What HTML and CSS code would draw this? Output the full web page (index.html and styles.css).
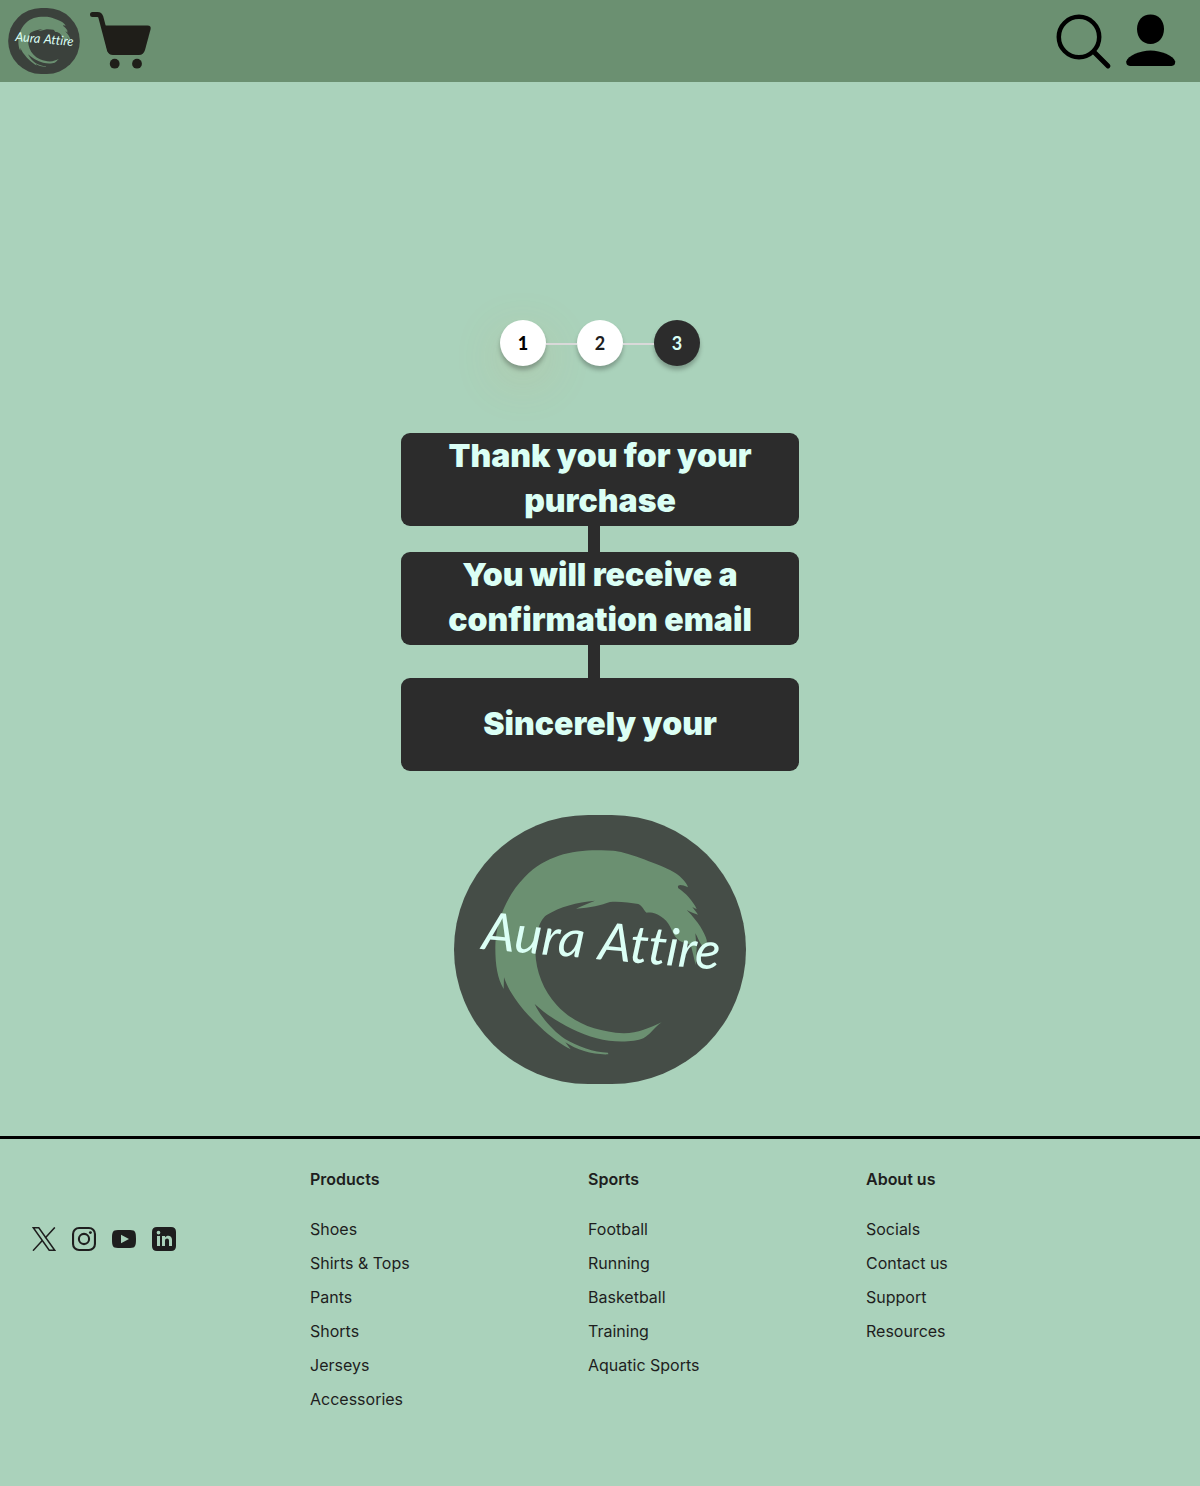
FILE: index.html
```html
<!DOCTYPE html>
<html lang="en">
<head>
  <meta charset="utf-8">
  <meta name="viewport" content="width=device-width, initial-scale=1">
  <title>Aura Attire</title>
  <link rel="stylesheet" href="styles.css">
</head>
<body>
  <svg class="defs" width="0" height="0" aria-hidden="true">
    <symbol id="swoosh" viewBox="12 30 876 807">
      <path d="M455 136C370 134 290 150 225 215C160 280 135 370 136 430C136 480 142 520 161 552L162 517C175 560 220 620 270 665C300 695 340 722 362 733L346 712C380 735 430 750 475 748L474 743C430 742 385 725 345 702C310 678 275 640 254 597C300 640 370 680 440 700C490 714 550 712 580 700C600 690 612 668 635 652C600 668 560 686 520 685C440 680 370 655 320 600C280 555 258 500 256 440C258 400 262 350 290 330C330 305 380 292 435 287C415 295 395 303 378 311C420 309 455 300 480 291C510 289 540 293 565 297C580 305 582 318 590 323C610 322 620 325 640 340C665 360 665 385 680 400C695 415 710 415 722 418L737 480L740 430L736 385C742 395 748 412 756 422C765 430 772 420 770 405C765 385 745 350 710 315C722 322 733 325 744 329C738 320 733 314 727 306C732 309 736 311 740 312C730 290 705 262 685 250C680 240 690 235 714 247C710 232 690 210 660 195C620 175 520 138 490 137Z"/>
    </symbol>
  </svg>

  <header class="topbar">
    <div class="topbar-group">
      <a class="brand" href="#" aria-label="Aura Attire home">
        <svg class="logo logo-small" viewBox="12 30 876 807">
          <rect class="logo-disc" x="12" y="30" width="876" height="807" rx="403"/>
          <use class="logo-swoosh" href="#swoosh" x="12" y="30" width="876" height="807"/>
          <text class="logo-text" transform="translate(94 432) rotate(5)">Aura <tspan x="350">Attire</tspan></text>
        </svg>
      </a>
      <button class="icon-button" type="button" aria-label="Cart">
        <svg width="62" height="58" viewBox="0 0 62 58" fill="#1f1e19">
          <path d="M2.500 2.500H7.500Q10 2.500 10.800 5L19.500 38" fill="none" stroke="#1f1e19" stroke-width="5" stroke-linecap="round"/>
          <path d="M12 13.500H57.500Q61.500 13.500 60.500 17.500L55 38Q53.500 43 49 43H23Q18.500 43 17.500 39Z"/>
          <circle cx="24.700" cy="51.700" r="4.900"/><circle cx="47" cy="51.700" r="4.900"/>
        </svg>
      </button>
    </div>
    <div class="topbar-group topbar-actions">
      <button class="icon-button" type="button" aria-label="Search">
        <svg width="56" height="56" viewBox="0 0 56 56" fill="none" stroke="#000" stroke-linecap="round">
          <circle cx="23" cy="23" r="20.200" stroke-width="4.500"/>
          <path d="M38 38L52 52" stroke-width="4.800"/>
        </svg>
      </button>
      <button class="icon-button" type="button" aria-label="Account">
        <svg width="50" height="54" viewBox="0 0 50 54">
          <path d="M24.500 .500C32.500 .500 38 6.500 38 15S32.500 30 24.500 30 11 23.500 11 15 16.500 .500 24.500 .500Z"/>
          <path d="M4 52Q0 51.500 .200 47.500C2 41.500 14 36.500 24.500 36.500S47.500 41.500 49.200 47.500Q49.500 51.500 45.500 52Z"/>
        </svg>
      </button>
    </div>
  </header>

  <main class="confirmation">
    <ol class="steps">
      <li class="step step-glow">1</li>
      <li class="step">2</li>
      <li class="step step-current" aria-current="step">3</li>
    </ol>

    <section class="messages">
      <h1 class="message">Thank you for your purchase</h1>
      <div class="connector"></div>
      <h2 class="message">You will receive a confirmation email</h2>
      <div class="connector connector-long"></div>
      <h2 class="message">Sincerely your</h2>
    </section>

    <svg class="logo logo-large" viewBox="12 30 876 807" role="img" aria-label="Aura Attire">
      <rect class="logo-disc" x="12" y="30" width="876" height="807" rx="403"/>
      <use class="logo-swoosh" href="#swoosh" x="12" y="30" width="876" height="807"/>
      <text class="logo-text" transform="translate(94 432) rotate(5)">Aura <tspan x="350">Attire</tspan></text>
    </svg>
  </main>

  <footer class="footer">
    <div class="socials">
      <a href="#" aria-label="X">
        <svg width="24" height="24" viewBox="0 0 24 24" fill="none" stroke="#1e1e1e" stroke-width="1.500">
          <path d="M1.300 .800H6.800L22.700 23.200H17.200Z"/><path d="M22.800 .400L13.200 11M10.300 13.600L1 23.700"/>
        </svg>
      </a>
      <a href="#" aria-label="Instagram">
        <svg width="24" height="24" viewBox="0 0 24 24" fill="none" stroke="#1e1e1e" stroke-width="2.100">
          <rect x="1.050" y="1.050" width="21.900" height="21.900" rx="6"/><circle cx="12" cy="12" r="5.100"/>
          <circle cx="18.400" cy="5.600" r="1.450" fill="#1e1e1e" stroke="none"/>
        </svg>
      </a>
      <a href="#" aria-label="YouTube">
        <svg width="24" height="24" viewBox="0 0 24 24">
          <path fill="#1e1e1e" fill-rule="evenodd" d="M12 3C17 3 20 3.100 21.300 3.500C23.600 4.200 24 7 24 12S23.600 19.800 21.300 20.500C20 20.900 17 21 12 21S4 20.900 2.700 20.500C.400 19.800 0 17 0 12S.400 4.200 2.700 3.500C4 3.100 7 3 12 3ZM9 7.800V16.200L17 12Z"/>
        </svg>
      </a>
      <a href="#" aria-label="LinkedIn">
        <svg width="24" height="24" viewBox="0 0 24 24">
          <path fill="#1e1e1e" fill-rule="evenodd" d="M5 0H19Q24 0 24 5V19Q24 24 19 24H5Q0 24 0 19V5Q0 0 5 0ZM5 9V19H8V9ZM6.500 3.700A1.800 1.800 0 1 0 6.500 7.400 1.800 1.800 0 1 0 6.500 3.700ZM10 9V19H13V13.700C13 11 17 10.700 17 13.700V19H20V12.800C20 8.300 15 7.500 13 10.500V9Z"/>
        </svg>
      </a>
    </div>
    <nav class="footer-column" aria-labelledby="products">
      <h3 id="products">Products</h3>
      <ul>
        <li><a href="#">Shoes</a></li>
        <li><a href="#">Shirts &amp; Tops</a></li>
        <li><a href="#">Pants</a></li>
        <li><a href="#">Shorts</a></li>
        <li><a href="#">Jerseys</a></li>
        <li><a href="#">Accessories</a></li>
      </ul>
    </nav>
    <nav class="footer-column" aria-labelledby="sports">
      <h3 id="sports">Sports</h3>
      <ul>
        <li><a href="#">Football</a></li>
        <li><a href="#">Running</a></li>
        <li><a href="#">Basketball</a></li>
        <li><a href="#">Training</a></li>
        <li><a href="#">Aquatic Sports</a></li>
      </ul>
    </nav>
    <nav class="footer-column" aria-labelledby="about">
      <h3 id="about">About us</h3>
      <ul>
        <li><a href="#">Socials</a></li>
        <li><a href="#">Contact us</a></li>
        <li><a href="#">Support</a></li>
        <li><a href="#">Resources</a></li>
      </ul>
    </nav>
  </footer>
</body>
</html>
```
FILE: styles.css
```css
* {
  box-sizing: border-box;
}

body {
  margin: 0;
  background: #aad2bb;
  color: #1e1e1e;
  font-family: Inter, "Liberation Sans", sans-serif;
  font-size: 16px;
}

svg {
  display: block;
}

.defs {
  position: absolute;
}

.topbar {
  display: flex;
  justify-content: space-between;
  padding: 8px 24px 8px 8px;
  background: #6b9071;
}

.topbar-group {
  display: flex;
  align-items: flex-start;
  gap: 10px;
}

.topbar-actions {
  gap: 14px;
  padding-top: 2px;
}

.icon-button {
  padding: 4px 0 0;
  border: 0;
  background: none;
  cursor: pointer;
}

.logo-small {
  width: 72px;
  height: 66px;
}

.logo-large {
  width: 292px;
  height: 269px;
}

.logo-disc {
  fill: #454d47;
}

.logo-small .logo-disc {
  fill: #3b413c;
}

.logo-swoosh {
  fill: #6b9071;
}

.logo-text {
  fill: #dbfff5;
  font-family: Lato, "Liberation Sans", cursive;
  font-size: 156px;
  font-style: italic;
  font-variant-ligatures: none;
}

.confirmation {
  display: flex;
  flex-direction: column;
  align-items: center;
  padding: 238px 16px 52px;
}

.steps {
  display: flex;
  gap: 31px;
  margin: 0 0 67px;
  padding: 0;
  list-style: none;
}

.step {
  position: relative;
  display: flex;
  align-items: center;
  justify-content: center;
  width: 46px;
  height: 46px;
  border-radius: 50%;
  background: #fff;
  box-shadow: 0 4px 4px rgba(0, 0, 0, 0.25);
  color: #1e1e1e;
  font-family: Lato, sans-serif;
  font-size: 18px;
  font-weight: 700;
}

.step + .step::before {
  content: "";
  position: absolute;
  top: 23px;
  right: 100%;
  width: 31px;
  height: 2px;
  background: #d9d9d9;
}

.step-glow {
  color: #000;
  font-weight: 900;
  box-shadow: 0 4px 4px rgba(0, 0, 0, 0.25), 0 14px 50px rgba(220, 150, 80, 0.2);
}

.step-current {
  background: #2c2c2c;
  color: #dbfff5;
}

.messages {
  width: 100%;
  max-width: 398px;
  margin-bottom: 44px;
}

.message {
  display: flex;
  align-items: center;
  justify-content: center;
  min-height: 93px;
  margin: 0;
  padding: 0 40px 3px;
  border-radius: 9px;
  background: #2c2c2c;
  color: #dbfff5;
  font-size: 32px;
  font-weight: 900;
  line-height: 45px;
  text-align: center;
}

.connector {
  width: 12px;
  height: 26px;
  margin-left: 187px;
  background: #2c2c2c;
}

.connector-long {
  height: 33px;
}

.footer {
  display: grid;
  grid-template-columns: repeat(4, 1fr);
  padding: 29px 56px 76px 32px;
  border-top: 3px solid #000;
}

.socials {
  display: flex;
  align-items: flex-start;
  gap: 16px;
  padding-top: 59px;
}

.footer-column h3 {
  margin: 0 0 28px;
  font-size: 16px;
  font-weight: 600;
  line-height: 22px;
}

.footer-column ul {
  display: grid;
  gap: 12px;
  margin: 0;
  padding: 0;
  list-style: none;
  line-height: 22px;
}

.footer-column a {
  color: inherit;
  text-decoration: none;
}
```
